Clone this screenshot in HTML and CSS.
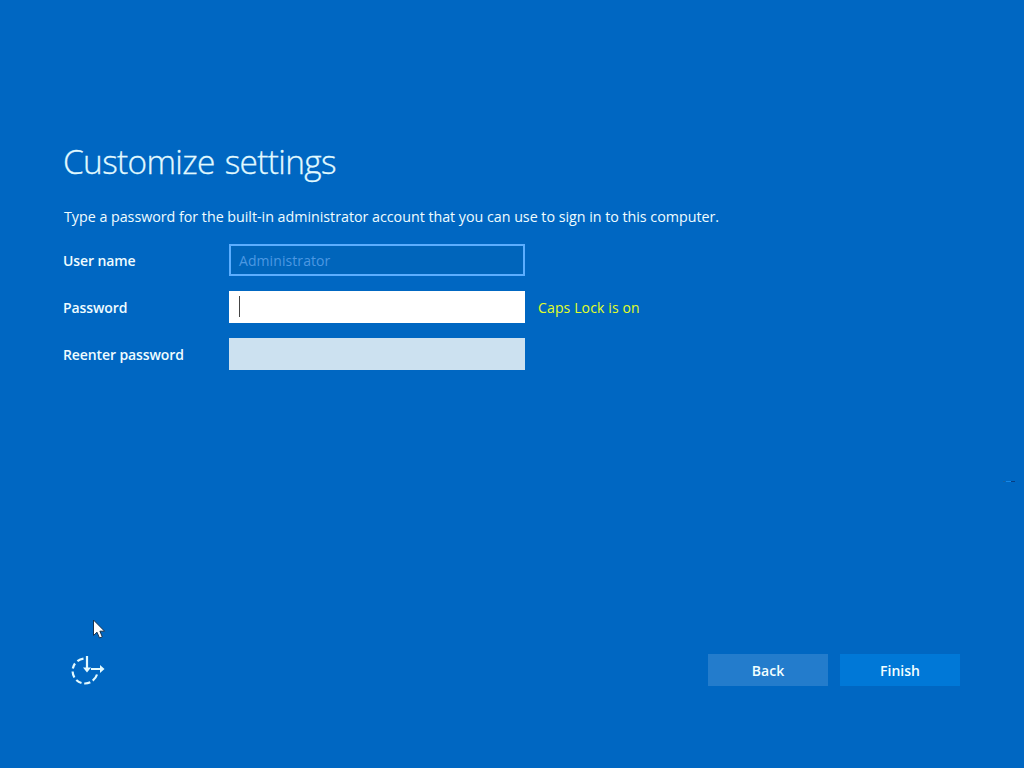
FILE: index.html
```html
<!DOCTYPE html>
<html lang="en">
<head>
<meta charset="utf-8">
<title>Customize settings</title>
<link rel="stylesheet" href="styles.css">
</head>
<body>
<main class="setup">
  <h1 class="title">Customize settings</h1>
  <p class="intro">Type a password for the built-in administrator account that you can use to sign in to this computer.</p>
  <form class="form">
    <div class="row"><span class="label">User name</span><div class="field field-disabled"><span class="value">Administrator</span></div></div>
    <div class="row"><span class="label">Password</span><div class="field field-active"><span class="caret"></span></div><span class="hint">Caps Lock is on</span></div>
    <div class="row"><span class="label">Reenter password</span><div class="field"></div></div>
  </form>
  <footer class="footer">
    <svg class="ease" width="36" height="32" viewBox="70 655 36 32" fill="none" stroke="#e2faff" stroke-width="2.2">
      <path d="M83.5 658.6A12.5 12.5 0 0 0 77.4 661.2M75 663.5A12.5 12.5 0 0 0 72.8 668.5M72.6 671.5A12.5 12.5 0 0 0 74.4 677.5M76.3 680A12.5 12.5 0 0 0 81.5 683M84.2 683.5A12.5 12.5 0 0 0 90.3 682.3M92.7 680.7A12.5 12.5 0 0 0 97 674.5"/>
      <path d="M87 656V669M91 669H102"/>
      <path d="M83 667.5H91L87 672.5ZM100 665L104.5 669L100 673Z" fill="#e2faff" stroke="none"/>
    </svg>
    <div class="actions"><button class="button back" type="button">Back</button><button class="button finish" type="button">Finish</button></div>
  </footer>
</main>
<svg class="pointer" width="14" height="21" viewBox="0 0 14 21"><path d="M1.5 1V16.5L5 13.2L7.5 19L10.3 17.8L7.9 12.2H12.6Z" fill="#fff" stroke="#17324f"/></svg>
<svg class="speck" width="14" height="4" viewBox="0 0 14 4"><path d="M1 1.5H3" stroke="#1762a0"/><path d="M4 1.5H9" stroke="#1688e8"/><path d="M9 1.5H13" stroke="#073e83"/></svg>
</body>
</html>
```
FILE: styles.css
```css
* { box-sizing: border-box; }
body { margin: 0; background: #0067c2; color: #effcff; font: 14px/20px "Open Sans", "Noto Sans", sans-serif; overflow: hidden; }
.setup { width: 1024px; height: 768px; padding: 137px 64px 82px 63px; display: flex; flex-direction: column; }
.title { margin: 0; font-size: 33.4px; line-height: 48px; font-weight: 300; letter-spacing: -.65px; word-spacing: 2px; white-space: nowrap; color: #e2faff; -webkit-text-stroke: .3px #e2faff; }
.intro { margin: 22px 0 17px; padding-left: 1px; font-size: 14.3px; line-height: 20px; white-space: nowrap; letter-spacing: -.03px; }
.form { display: grid; gap: 15px; }
.row { display: flex; align-items: center; height: 32px; }
.label { width: 166px; padding-top: 2px; font-weight: 600; letter-spacing: -.1px; white-space: nowrap; }
.field { width: 296px; height: 32px; display: flex; align-items: center; padding: 0 10px; background: #cce1f0; }
.field-disabled { border: 2px solid #5caeff; background: #0065bb; padding: 2px 8px 0; color: #4c98e2; letter-spacing: .08px; }
.field-active { background: #fff; }
.caret { width: 1px; height: 21px; margin-bottom: 1px; background: #444; }
.hint { margin-left: 13px; padding-top: 2px; color: #e3ff27; letter-spacing: .14px; white-space: nowrap; }
.footer { margin-top: auto; display: flex; justify-content: space-between; height: 32px; }
.ease { margin-left: 7px; margin-top: 1px; }
.actions { display: flex; gap: 12px; }
.button { width: 120px; height: 32px; padding: 2px 0 0; border: 0; color: #f2ffff; font: 600 14px/20px "Open Sans", sans-serif; }
.back { background: #237ccc; }
.finish { background: #0078d7; }
.pointer { position: absolute; left: 92px; top: 619px; }
.speck { position: absolute; left: 1002px; top: 480px; }
```
